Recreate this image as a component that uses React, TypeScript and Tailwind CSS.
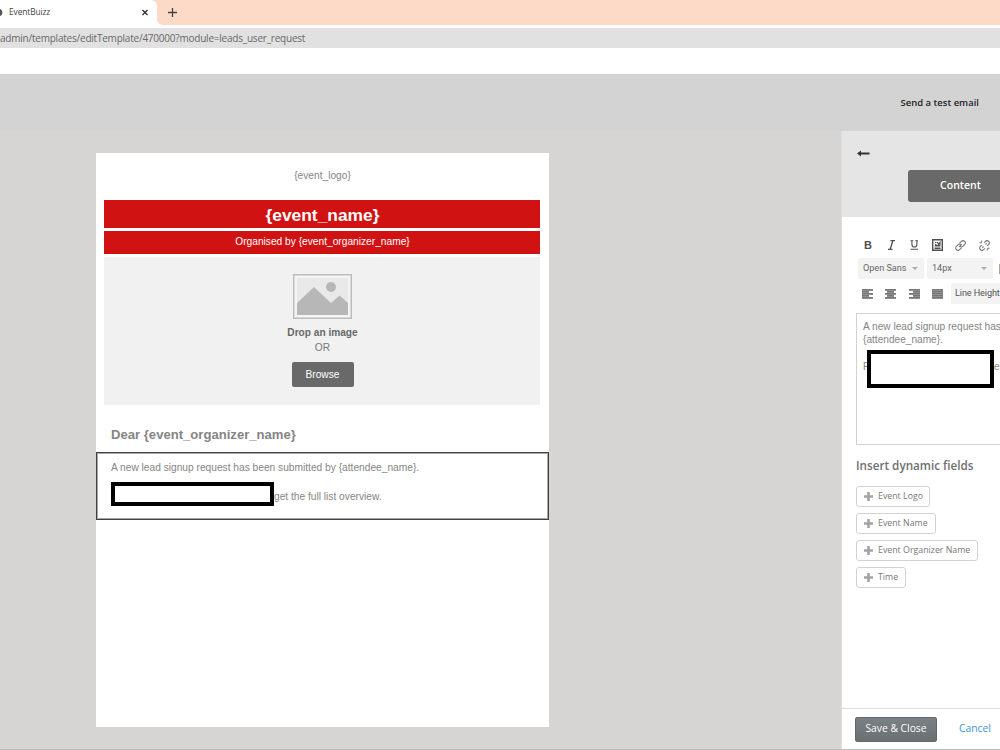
import React from "react";

const Caret = () => (
  <svg width="6" height="3" viewBox="0 0 6 3" className="shrink-0">
    <path d="M0 0h6L3 3z" fill="#aaaaaa" />
  </svg>
);

type Align = "left" | "center" | "right" | "justify";

const AlignIcon = ({ kind }: { kind: Align }) => {
  const short = kind === "justify" ? 11 : 7;
  const x = kind === "center" ? 2 : kind === "right" ? 4 : 0;
  return (
    <svg width="11" height="10" viewBox="0 0 11 10" fill="#6a6a6a" className="shrink-0">
      {[0, 2, 4, 6, 8].map((y, i) => (
        <rect key={y} x={i % 2 ? x : 0} y={y + 0.1} width={i % 2 ? short : 11} height="1.65" />
      ))}
    </svg>
  );
};

const FieldButton = ({ label, size }: { label: string; size: string }) => (
  <button
    className={`${size} flex h-[21px] items-center gap-[5px] rounded-[3px] border border-[#d2d2d2] bg-white pl-[7px] text-[8.8px] whitespace-nowrap text-[#777777]`}
  >
    <svg width="9" height="9" viewBox="0 0 9 9" className="shrink-0">
      <path d="M3.2 0h2.6v3.2H9v2.6H5.8V9H3.2V5.8H0V3.2h3.2z" fill="#a3a3a3" />
    </svg>
    {label}
  </button>
);

const Browser = () => (
  <header className="flex h-[74px] flex-col bg-white">
    <div className="flex h-6 bg-white">
      <div className="flex h-6 w-[157px] items-center bg-[#fddac8]">
        <div className="flex h-6 w-full items-center rounded-tr-[6px] bg-white text-[#444444]">
          <svg width="3" height="9" viewBox="0 0 3 9" className="shrink-0">
            <path d="M0 1C3.2 2 3.2 7 0 8z" fill="#555555" />
          </svg>
          <span className="ml-[6px] w-[132px] font-['Open_Sans',sans-serif] text-[8.4px] tracking-[-0.1px]">EventBuizz</span>
          <svg width="8" height="7" viewBox="0 0 8 7" className="shrink-0">
            <path d="M1.500 1l5 5M6.500 1l-5 5" stroke="#333333" strokeWidth="1.4" />
          </svg>
        </div>
      </div>
      <div className="flex h-[25px] flex-1 items-center rounded-bl-[6px] bg-[#fddac8] pl-[11px]">
        <svg width="9" height="9" viewBox="0 0 9 9">
          <path d="M4.5 0v9M0 4.5h9" stroke="#444444" strokeWidth="1.3" />
        </svg>
      </div>
    </div>
    <div className="mt-1 flex h-5 items-center bg-[#e1e1e1] font-['Open_Sans',sans-serif] text-[10px] tracking-[-0.22px] whitespace-nowrap text-[#686868]">
      admin/templates/editTemplate/470000?module=leads_user_request
    </div>
  </header>
);

const EmailPage = () => (
  <section className="mt-[22px] ml-24 flex h-[574px] w-[453px] flex-col bg-white font-['Liberation_Sans',sans-serif] text-[10.2px] text-[#858585]">
    <div className="flex h-[46.500px] items-center justify-center pb-px">{"{event_logo}"}</div>
    <h1 className="mr-[9px] ml-2 flex h-[28.500px] items-center justify-center bg-[#d11213] pt-[3px] pl-px text-[17.4px] font-bold text-white">{"{event_name}"}</h1>
    <div className="mr-[9px] ml-2 mt-[3px] flex h-[23px] items-center justify-center bg-[#d11213] pb-[2px] pl-px text-[10.2px] text-white">
      {"Organised by {event_organizer_name}"}
    </div>
    <div className="mr-[9px] ml-2 mt-[3px] flex h-[148px] flex-col items-center bg-[#f1f1f1] pt-[17px] pl-px text-[#777777]">
      <svg width="59" height="45" viewBox="0 0 59 45">
        <rect x="0.75" y="0.75" width="57.5" height="43.5" fill="#f4f4f4" stroke="#bdbdbd" strokeWidth="1.5" />
        <rect x="4" y="4" width="51" height="37" fill="#e9e9e9" />
        <path d="M4 41V29L21 13L38 29L46.500 21.500L55 29V41z" fill="#b7b7b7" />
        <circle cx="38" cy="13" r="5" fill="#b7b7b7" />
      </svg>
      <strong className="mt-[6px] text-[10.15px] leading-[15px] text-[#686868]">Drop an image</strong>
      <span className="text-[10.200px] leading-[15px]">OR</span>
      <button className="mt-[7px] h-[25px] w-[62px] rounded-[2px] bg-[#696969] text-[10.2px] text-white">Browse</button>
    </div>
    <h2 className="mt-[21px] ml-[15px] h-[26px] text-[13.1px] leading-[18px] font-bold">{"Dear {event_organizer_name}"}</h2>
    <div className="h-[68px] border border-[#404040] pt-[8px] pl-[14px] shadow-[inset_0_0_0_1px_#a8a8a8]">
      <p className="h-[21px] leading-[14px]">{"A new lead signup request has been submitted by {attendee_name}."}</p>
      <div className="flex h-6">
        <div className="h-[24px] w-[163px] border-4 border-black bg-white" />
        <span className="pt-[8px] leading-[13px]">get the full list overview.</span>
      </div>
    </div>
  </section>
);

const Toolbar = () => (
  <div className="h-[96px] w-[180px] pt-[20px]">
    <div className="ml-[7px] flex h-4 items-center text-[#505050]">
      <span className="w-[24px] pl-px font-['Liberation_Sans',sans-serif] text-[11px] font-bold">B</span>
      <svg width="9" height="10" viewBox="0 0 9 10" fill="none" stroke="currentColor" className="mr-[14px]">
        <path d="M3.500 .7h4.500M1 9.300h4.500M5.800 .7L3.200 9.300" strokeWidth="1.300" />
      </svg>
      <svg width="9" height="10" viewBox="0 0 9 10" fill="none" stroke="currentColor" className="mr-[13px]">
        <path d="M.5 .7h2.800M5.200 .7H8M1.900 .7v3.500c0 3.800 5 3.800 5 0V.7M.5 9.200h7.500" strokeWidth="1.100" />
      </svg>
      <svg width="11" height="12" viewBox="0 0 11 12" fill="none" stroke="currentColor" className="mr-[12px]">
        <path d="M.7 .7h9.600v10.600H.7z" strokeWidth="1.400" />
        <path d="M3 3.500h1.500M3 5.500h1.500M5.500 3l1 2.500L8.500 2.500M8 3v3.500H3M2.500 8h6M2.500 9.500h6" strokeWidth="1.100" />
      </svg>
      <svg width="11" height="11" viewBox="0 0 24 24" fill="none" stroke="#707070" strokeWidth="2.300" className="mr-[13px]">
        <path d="M9 15l6-6M10 7l4-4a4.500 4.500 0 0 1 7 7l-4 4a4.500 4.500 0 0 1-6 0M14 17l-4 4a4.500 4.500 0 0 1-7-7l4-4a4.500 4.500 0 0 1 6 0" />
      </svg>
      <svg width="11" height="11" viewBox="0 0 24 24" fill="none" stroke="#707070" strokeWidth="2.300">
        <path d="M11 6l3-3a4.500 4.500 0 0 1 7 7l-3 3M13 18l-3 3a4.500 4.500 0 0 1-7-7l3-3M1 6h5M6 1v4M18 18h5M18 19v4M14 10l3-3M7 17l3-3" />
      </svg>
    </div>
    <div className="mt-[5px] flex h-[21px] gap-[3px] font-['Roboto',sans-serif] text-[9.1px] text-[#666666]">
      <div className="ml-[2px] flex w-[66px] items-center justify-between rounded-[2px] bg-[#f3f3f3] pr-[6px] pl-[5px] whitespace-nowrap">Open Sans<Caret /></div>
      <div className="flex w-[66px] items-center justify-between rounded-[2px] bg-[#f3f3f3] pr-[6px] pl-[5px]">14px<Caret /></div>
      <svg width="10" height="21" viewBox="0 0 10 21" className="ml-[3px]">
        <path d="M9 6.500H.7v9H9" fill="none" stroke="#a79b92" strokeWidth="1.200" />
      </svg>
    </div>
    <div className="mt-[4px] flex h-[21px] items-center font-['Roboto',sans-serif] text-[9.1px] text-[#555555]">
      <div className="ml-[6px] flex w-[89px] gap-[12.400px] pt-px">
        <AlignIcon kind="left" />
        <AlignIcon kind="center" />
        <AlignIcon kind="right" />
        <AlignIcon kind="justify" />
      </div>
      <div className="flex h-[21px] w-[80px] items-center rounded-[2px] bg-[#f3f3f3] pl-[4px] tracking-[-0.1px] whitespace-nowrap">Line Height</div>
    </div>
  </div>
);

const SidePanel = () => (
  <aside className="flex w-[159px] flex-col overflow-hidden border-l border-[#dedede] bg-white font-['Open_Sans',sans-serif]">
    <div className="h-[86px] bg-[#e5e5e5] pt-[18px] pl-[15px]">
      <svg width="13" height="9" viewBox="0 0 13 9">
        <path d="M0 4.500L4 1.500V3.500h8.500v2H4v2z" fill="#333333" />
      </svg>
      <button className="mt-[12px] ml-[51px] h-[32px] w-[105px] rounded-[3px] bg-[#696969] text-[10.5px] font-semibold text-white">Content</button>
    </div>
    <div className="h-[491px] pl-[14px]">
      <Toolbar />
      <div className="h-[132px] w-[180px] border border-[#d2d2d2] pt-[6px] pl-[6px] font-['Liberation_Sans',sans-serif] text-[10.15px] leading-[13.300px] whitespace-nowrap text-[#858585]">
        <p>A new lead signup request has</p>
        <p>{"{attendee_name}."}</p>
        <div className="mt-[3px] flex">
          <span className="w-[4px] pt-[10px]">P</span>
          <div className="relative h-[38px] w-[127px] border-4 border-black bg-white" />
          <span className="pt-[10px]">e</span>
        </div>
      </div>
      <h3 className="mt-[12px] text-[11.7px] leading-4 font-semibold text-[#707070]">Insert dynamic fields</h3>
      <div className="mt-[13px] flex flex-col gap-[6px]">
        <FieldButton label="Event Logo" size="w-[74px]" />
        <FieldButton label="Event Name" size="w-[80px]" />
        <FieldButton label="Event Organizer Name" size="w-[122px]" />
        <FieldButton label="Time" size="w-[50px]" />
      </div>
    </div>
    <footer className="flex h-[41px] items-center border-t border-[#dddddd] pl-[13px]">
      <button className="h-[25px] w-[82px] rounded-[2px] border border-[#62686b] bg-linear-to-b from-[#7b8285] to-[#6a6f72] text-[10.300px] whitespace-nowrap text-white">Save &amp; Close</button>
      <span className="ml-[22px] text-[10.3px] text-[#4291dc]">Cancel</span>
    </footer>
  </aside>
);

export default function App() {
  return (
    <div className="flex h-[750px] w-[1000px] flex-col overflow-hidden border-b border-[#bcbcbc]">
      <Browser />
      <div className="flex h-[57px] shrink-0 items-center justify-end bg-[#d3d3d3] pt-[2px] pr-[21px] font-['Open_Sans',sans-serif] text-[9.5px] font-semibold text-[#252525]">
        Send a test email
      </div>
      <main className="flex h-[618px] shrink-0 justify-between bg-[#d6d5d3]">
        <EmailPage />
        <SidePanel />
      </main>
    </div>
  );
}
